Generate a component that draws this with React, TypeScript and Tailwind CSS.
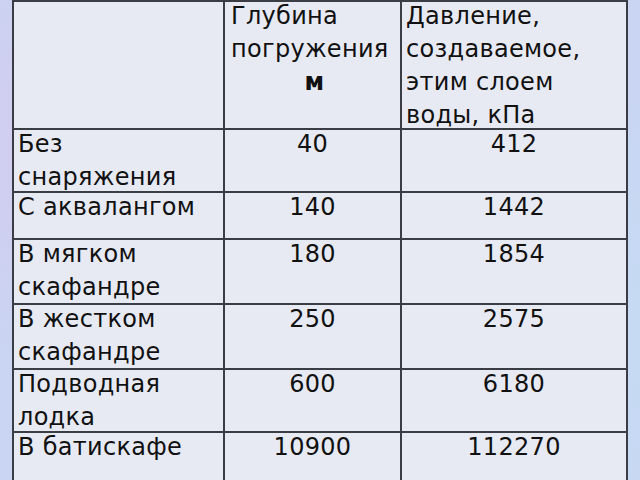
const rows: { label: string; depth: string; pressure: string }[] = [
  { label: "Без снаряжения", depth: "40", pressure: "412" },
  { label: "С аквалангом", depth: "140", pressure: "1442" },
  { label: "В мягком скафандре", depth: "180", pressure: "1854" },
  { label: "В жестком скафандре", depth: "250", pressure: "2575" },
  { label: "Подводная лодка", depth: "600", pressure: "6180" },
  { label: "В батискафе", depth: "10900", pressure: "112270" },
];

export default function App() {
  return (
    <div
      className="w-[640px] h-[480px] overflow-hidden bg-[#c9d5f2] bg-[radial-gradient(circle_at_20%_30%,#d8c8ef_0,transparent_40%),radial-gradient(circle_at_80%_70%,#c4def5_0,transparent_45%)]"
      style={{ fontFamily: '"DejaVu Sans", "Noto Sans", sans-serif' }}
    >
      <div className="ml-[12px] w-[616px] bg-[#3a3d44] p-[2px] grid grid-cols-[209px_175px_224px] grid-rows-[126px_61px_45px_63px_63px_61px_62px] gap-[2px] text-[24px] tracking-[0.3px] leading-[33px] text-[#111]">
        <div className="bg-[#e7eaf3]" />
        <div className="bg-[#e7eaf3] pl-[6px] pr-[2px]">
          <p className="-mt-[2px]">Глубина погружения</p>
          <p className="text-center font-bold">м</p>
        </div>
        <div className="bg-[#e7eaf3] pl-[4px] pr-[4px]">
          <p className="-mt-[2px]">Давление, создаваемое, этим слоем воды, кПа</p>
        </div>
        {rows.map((r) => (
          <>
            <div key={r.label + "a"} className="bg-[#e7eaf3] pl-[4px] pr-[6px]">
              <p className="-mt-[2px]">{r.label}</p>
            </div>
            <div key={r.label + "b"} className="bg-[#e7eaf3] px-[6px] text-center">
              <p className="-mt-[2px]">{r.depth}</p>
            </div>
            <div key={r.label + "c"} className="bg-[#e7eaf3] px-[6px] text-center">
              <p className="-mt-[2px]">{r.pressure}</p>
            </div>
          </>
        ))}
      </div>
    </div>
  );
}
